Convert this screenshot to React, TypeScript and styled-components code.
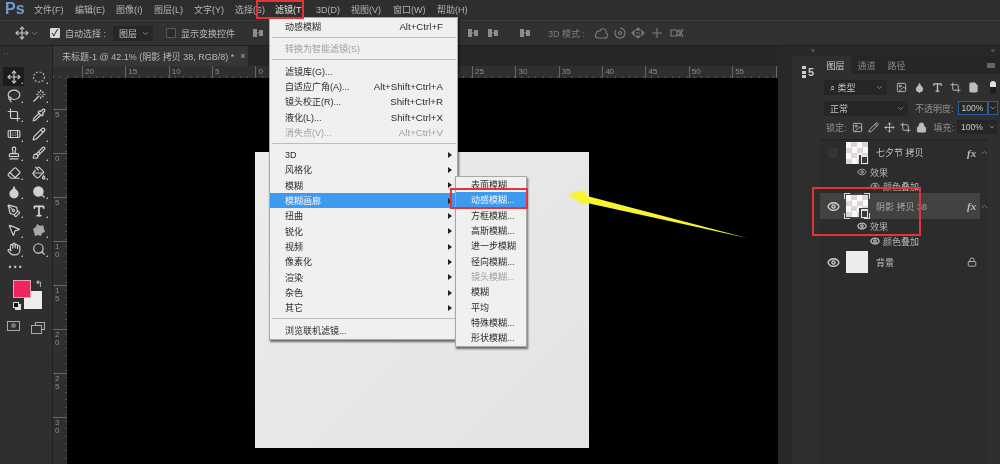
import React from "react";
import styled, { createGlobalStyle } from "styled-components";
import {
  Brush,
  ChevronDown,
  ChevronUp,
  Crop,
  Droplet,
  Eye,
  Eraser,
  File,
  Hand,
  Image,
  Lasso,
  Lock,
  Move,
  PaintBucket,
  Pencil,
  PenTool,
  Pipette,
  Search,
  Stamp,
  Type,
  Wand,
  Bandage,
  MousePointer2,
} from "lucide-react";

const GlobalStyle = createGlobalStyle`
  html, body { margin: 0; padding: 0; background: #2b2b2b; overflow: hidden; }
  #root { width: 1000px; height: 464px; }
  * { box-sizing: border-box; }
`;

const Shell = styled.div`
  position: relative;
  width: 1000px;
  height: 464px;
  display: flex;
  flex-direction: column;
  overflow: hidden;
  font-family: "Liberation Sans", "Noto Sans CJK SC", sans-serif;
  font-size: 9px;
  color: #c4c4c4;
  background: #2b2b2b;
  filter: blur(0.4px);
`;

const MenuBar = styled.div`
  height: 20px;
  flex: none;
  display: flex;
  align-items: center;
  padding: 0 0 1px 34px;
  gap: 11.5px;
  background: #2e2e2e;
`;

const Logo = styled.span`
  position: absolute;
  left: 5px;
  top: 0;
  font-size: 16px;
  font-weight: 700;
  color: #6d9fce;
`;

const MenuLabel = styled.span<{ $w: number; $active?: boolean }>`
  width: ${(p) => p.$w}px;
  white-space: nowrap;
  font-size: 9px;
  color: ${(p) => (p.$active ? "#e4e4e4" : "#b4b4b4")};
`;

const OptionsBar = styled.div`
  height: 26px;
  flex: none;
  display: flex;
  align-items: center;
  padding-left: 15px;
  background: #313131;
  border-top: 1px solid #3a3a3a;
  border-bottom: 1px solid #1f1f1f;
`;

const Check = styled.span<{ $on?: boolean; $ml: number }>`
  width: 10px;
  height: 10px;
  margin-left: ${(p) => p.$ml}px;
  flex: none;
  display: grid;
  place-items: center;
  font-size: 9px;
  line-height: 1;
  font-weight: 700;
  color: #333;
  background: ${(p) => (p.$on ? "#d8d8d8" : "#2a2a2a")};
  border: 1px solid ${(p) => (p.$on ? "#d8d8d8" : "#5c5c5c")};
  border-radius: 1px;
`;

const OptionText = styled.span<{ $ml: number; $dim?: boolean }>`
  margin-left: ${(p) => p.$ml}px;
  white-space: nowrap;
  font-size: 9px;
  color: ${(p) => (p.$dim ? "#7e7e7e" : "#b8b8b8")};
`;

const SelectBox = styled.span<{ $w: number; $ml?: number }>`
  width: ${(p) => p.$w}px;
  height: 15px;
  margin-left: ${(p) => p.$ml ?? 0}px;
  flex: none;
  display: flex;
  align-items: center;
  justify-content: space-between;
  padding: 0 3px 0 6px;
  font-size: 9px;
  color: #c0c0c0;
  background: #262626;
  border-radius: 1px;
`;

const Glyph = styled.svg<{ $ml?: number }>`
  flex: none;
  margin-left: ${(p) => p.$ml ?? 0}px;
`;

const Workspace = styled.div`
  flex: 1;
  min-height: 0;
  display: flex;
`;

const ToolPanel = styled.div`
  width: 53px;
  flex: none;
  padding: 4px 0 0 3px;
  background: #2f2f2f;
  border-right: 1px solid #1f1f1f;
`;

const Grip = styled.div`
  height: 17px;
  color: #777;
  font-size: 7px;
  letter-spacing: 1px;
  line-height: 7px;
`;

const ToolGrid = styled.div`
  display: grid;
  grid-template-columns: 21px 21px;
  column-gap: 4px;
  grid-auto-rows: 19.2px;
  justify-items: center;
  align-items: center;
`;

const ToolCell = styled.div<{ $active?: boolean }>`
  position: relative;
  width: 21px;
  height: 19px;
  display: grid;
  place-items: center;
  color: #d0d0d0;
  background: ${(p) => (p.$active ? "#1c1c1c" : "transparent")};
  &::after {
    content: "";
    position: absolute;
    right: 1px;
    bottom: 2px;
    border-left: 2px solid transparent;
    border-bottom: 2px solid #bdbdbd;
  }
`;

const Dots = styled.div`
  height: 21px;
  padding: 4px 0 0 5px;
  font-size: 14px;
  line-height: 8px;
  font-weight: 700;
  letter-spacing: 0.5px;
  color: #c8c8c8;
`;

const Swatches = styled.div`
  position: relative;
  height: 36px;
  margin: 0 0 0 10px;
`;

const BackColor = styled.div`
  position: absolute;
  left: 11px;
  top: 11px;
  width: 18px;
  height: 18px;
  background: #eeeeee;
`;

const ForeColor = styled.div`
  position: absolute;
  left: 0;
  top: 0;
  width: 18px;
  height: 18px;
  background: #f2255d;
  border: 1px solid #e8a0b4;
`;

const SwapMark = styled.span`
  position: absolute;
  left: 22px;
  top: 0;
  font-size: 9px;
  line-height: 9px;
  color: #ddd;
`;

const ResetMark = styled.span`
  position: absolute;
  left: 0;
  top: 22px;
  width: 6px;
  height: 6px;
  background: #111;
  border: 1px solid #ddd;
  box-shadow: 2px 2px 0 #ddd;
`;

const ModeRow = styled.div`
  display: flex;
  align-items: center;
  gap: 12px;
  margin: 5px 0 0 4px;
`;

const QuickMask = styled.span`
  width: 13px;
  height: 10px;
  display: grid;
  place-items: center;
  border: 1px solid #aaa;
  &::after {
    content: "";
    width: 5px;
    height: 5px;
    border-radius: 50%;
    background: #777;
  }
`;

const ScreenMode = styled.span`
  position: relative;
  width: 10px;
  height: 8px;
  margin-left: 3px;
  border: 1px solid #aaa;
  &::after {
    content: "";
    position: absolute;
    left: -5px;
    top: 2px;
    width: 9px;
    height: 7px;
    background: #2f2f2f;
    border: 1px solid #aaa;
  }
`;

const DocArea = styled.div`
  flex: 1;
  min-width: 0;
  display: flex;
  flex-direction: column;
  background: #000;
`;

const TabStrip = styled.div`
  height: 20px;
  flex: none;
  display: flex;
  background: #262626;
`;

const DocTab = styled.div`
  width: 195px;
  display: flex;
  align-items: center;
  padding-left: 9px;
  gap: 6px;
  white-space: nowrap;
  font-size: 9px;
  color: #b8b8b8;
  background: #363636;
`;

const HRuler = styled.div`
  height: 12px;
  flex: none;
  display: flex;
  padding-left: 29px;
  overflow: hidden;
  background: repeating-linear-gradient(
      90deg,
      #555 0 1px,
      transparent 1px 7.2px
    )
    bottom left / 100% 2px no-repeat #2f2f2f;
`;

const HTick = styled.span`
  width: 43.35px;
  flex: none;
  padding-left: 2px;
  font-size: 8px;
  line-height: 11px;
  color: #8c8c8c;
  border-left: 1px solid #666;
`;

const CanvasRow = styled.div`
  flex: 1;
  min-height: 0;
  display: flex;
`;

const VRuler = styled.div`
  width: 14px;
  flex: none;
  padding-top: 31px;
  overflow: hidden;
  background: repeating-linear-gradient(
      180deg,
      #555 0 1px,
      transparent 1px 7.3px
    )
    top right / 2px 100% no-repeat #2f2f2f;
`;

const VTick = styled.div`
  height: 44px;
  padding: 1px 0 0 2px;
  font-size: 8px;
  line-height: 8px;
  color: #8c8c8c;
  border-top: 1px solid #666;
  white-space: pre;
`;

const Canvas = styled.div`
  flex: 1;
  background: #000;
  padding: 74px 0 0 188px;
`;

const Sheet = styled.div`
  width: 334px;
  height: 296px;
  background: linear-gradient(135deg, #ececec, #e3e3e3);
`;

const Dock = styled.div`
  width: 42px;
  flex: none;
  display: flex;
  flex-direction: column;
  padding-left: 14px;
  background: #282828;
`;

const PanelGrip = styled.div`
  height: 10px;
  flex: none;
  padding-right: 5px;
  text-align: right;
  font-size: 7px;
  line-height: 9px;
  color: #777;
`;

const DockStrip = styled.div`
  flex: 1;
  padding: 9px 0 0 10px;
  background: #2e2e2e;
`;

const HistoryIcon = styled.div`
  display: flex;
  align-items: center;
  gap: 2px;
  height: 14px;
  font-size: 11px;
  font-weight: 700;
  color: #ccc;
`;

const Stack = styled.span`
  width: 4px;
  height: 12px;
  background: repeating-linear-gradient(180deg, #ccc 0 3px, #2e2e2e 3px 4.5px);
`;

const LayersPanel = styled.div`
  width: 180px;
  flex: none;
  display: flex;
  flex-direction: column;
  background: #2f2f2f;
`;

const PanelHead = styled(PanelGrip)`
  background: #282828;
`;

const PanelTabs = styled.div`
  height: 18px;
  flex: none;
  display: flex;
  align-items: center;
  background: #262626;
`;

const PanelTab = styled.span<{ $active?: boolean }>`
  width: 31px;
  height: 100%;
  margin-right: ${(p) => (p.$active ? 0 : -1)}px;
  display: grid;
  place-items: center;
  font-size: 9px;
  color: ${(p) => (p.$active ? "#cfcfcf" : "#858585")};
  background: ${(p) => (p.$active ? "#2f2f2f" : "transparent")};
`;

const PanelMenu = styled.span`
  width: 8px;
  height: 5px;
  margin-left: auto;
  margin-right: 5px;
  background: #666;
`;

const PanelRow = styled.div<{ $h: number }>`
  height: ${(p) => p.$h}px;
  flex: none;
  display: flex;
  align-items: center;
  padding-left: 4px;
`;

const FilterIcons = styled.div`
  display: flex;
  gap: 7px;
  margin-left: 9px;
  color: #bcbcbc;
`;

const SwitchDot = styled.span`
  width: 6px;
  height: 13px;
  margin-left: 11px;
  border-radius: 3px;
  background: linear-gradient(#e0e0e0 0 6px, #1d1d1d 6px);
`;

const PanelLabel = styled.span<{ $ml: number }>`
  margin-left: ${(p) => p.$ml}px;
  white-space: nowrap;
  font-size: 9px;
  color: #8f8f8f;
`;

const NumberBox = styled.span<{ $focus?: boolean; $ml?: number }>`
  width: 30px;
  height: 14px;
  margin-left: ${(p) => p.$ml ?? 0}px;
  flex: none;
  padding-left: 3px;
  font-size: 8.5px;
  line-height: 12px;
  color: #c8c8c8;
  background: #262626;
  border: 1px solid ${(p) => (p.$focus ? "#2a5f9e" : "#262626")};
`;

const ChevronBox = styled.span<{ $focus?: boolean }>`
  width: 10px;
  height: 14px;
  flex: none;
  display: grid;
  place-items: center;
  color: #aaa;
  background: #262626;
  border: 1px solid ${(p) => (p.$focus ? "#2a5f9e" : "#262626")};
`;

const LockIcons = styled.div`
  display: flex;
  align-items: center;
  gap: 5px;
  margin-left: 5px;
  color: #bcbcbc;
`;

const LayerList = styled.div`
  flex: 1;
  width: 168px;
  border-top: 1px solid #242424;
  background: #2c2c2c;
`;

const LayerRow = styled.div<{ $selected?: boolean; $h?: number }>`
  height: ${(p) => p.$h ?? 26}px;
  display: flex;
  align-items: center;
  background: ${(p) => (p.$selected ? "#424242" : "transparent")};
`;

const EyeSlot = styled.span`
  width: 26px;
  flex: none;
  display: grid;
  place-items: center;
  color: #d2d2d2;
`;

const HiddenBox = styled.span`
  width: 8px;
  height: 8px;
  background: #333;
  border: 1px solid #3a3a3a;
`;

const Thumb = styled.span<{ $plain?: boolean; $framed?: boolean }>`
  position: relative;
  width: 22px;
  height: 22px;
  flex: none;
  background: ${(p) =>
    p.$plain
      ? "#ececec"
      : "repeating-conic-gradient(#dcd6d6 0 25%, #fbf8f8 0 50%) 0 0 / 11px 11px"};
  &::before {
    content: "";
    display: ${(p) => (p.$framed ? "block" : "none")};
    position: absolute;
    inset: -2px;
    --c: #d8d8d8;
    background:
      linear-gradient(var(--c) 0 0) 0 0 / 6px 1px,
      linear-gradient(var(--c) 0 0) 0 0 / 1px 6px,
      linear-gradient(var(--c) 0 0) 100% 0 / 6px 1px,
      linear-gradient(var(--c) 0 0) 100% 0 / 1px 6px,
      linear-gradient(var(--c) 0 0) 0 100% / 6px 1px,
      linear-gradient(var(--c) 0 0) 0 100% / 1px 6px,
      linear-gradient(var(--c) 0 0) 100% 100% / 6px 1px,
      linear-gradient(var(--c) 0 0) 100% 100% / 1px 6px;
    background-repeat: no-repeat;
  }
`;

const SmartBadge = styled.span`
  position: absolute;
  right: -1px;
  bottom: -1px;
  width: 10px;
  height: 10px;
  display: grid;
  place-items: center;
  background: #3a3a3a;
  &::after {
    content: "";
    width: 5px;
    height: 6px;
    border: 1px solid #e4e4e4;
    border-top-width: 2px;
  }
`;

const LayerName = styled.span<{ $dim?: boolean }>`
  flex: 1;
  margin-left: 8px;
  white-space: nowrap;
  font-size: 9px;
  color: ${(p) => (p.$dim ? "#a6a6a6" : "#c2c2c2")};
`;

const Fx = styled.span`
  width: 10px;
  margin-right: 3px;
  font-family: "Liberation Serif", serif;
  font-style: italic;
  font-weight: 700;
  font-size: 11px;
  color: #bbb;
`;

const Collapse = styled.span`
  width: 8px;
  align-self: stretch;
  display: grid;
  place-items: center;
  color: #888;
  background: #2c2c2c;
`;

const EffectRow = styled.div<{ $indent: number; $h: number }>`
  height: ${(p) => p.$h}px;
  display: flex;
  align-items: center;
  gap: 3px;
  padding-left: ${(p) => p.$indent}px;
  font-size: 9px;
  color: #b6b6b6;
`;

const FilterMenu = styled.div`
  position: absolute;
  left: 269px;
  top: 17px;
  width: 189px;
  padding: 1px 0;
  color: #2a2a2a;
  background: #f0f0f0;
  border: 1px solid #a8a8a8;
  box-shadow: 1px 2px 2px rgba(0, 0, 0, 0.55);
  font-size: 9px;
`;

const SubMenu = styled(FilterMenu)`
  left: 455px;
  top: 176px;
  width: 72px;
  padding: 0;
`;

const MenuItem = styled.div<{ $hot?: boolean; $off?: boolean }>`
  height: 15.33px;
  display: flex;
  align-items: center;
  justify-content: space-between;
  padding: 0 14px 0 15px;
  white-space: nowrap;
  color: ${(p) => (p.$hot ? "#f4f4f4" : p.$off ? "#a0a0a0" : "#2a2a2a")};
  background: ${(p) => (p.$hot ? "#3d9af0" : "transparent")};
`;

const Shortcut = styled.span`
  font-size: 9.7px;
`;

const Arrow = styled.span`
  margin-right: -9px;
  border-left: 4px solid #222;
  border-top: 3px solid transparent;
  border-bottom: 3px solid transparent;
`;

const MenuRule = styled.div`
  height: 1px;
  margin: 2.95px 1px 2.95px 2px;
  background: #bdbdbd;
`;

const SubItem = styled(MenuItem)`
  padding: 0 0 0 15px;
`;

const RedBox = styled.div<{ $x: number; $y: number; $w: number; $h: number }>`
  position: absolute;
  left: ${(p) => p.$x}px;
  top: ${(p) => p.$y}px;
  width: ${(p) => p.$w}px;
  height: ${(p) => p.$h}px;
  border: 2px solid #e2333a;
`;

const Pointer = styled.svg`
  position: absolute;
  left: 560px;
  top: 180px;
`;

const menuLabels: [string, number][] = [
  ["文件(F)", 29.5],
  ["编辑(E)", 29.5],
  ["图像(I)", 26.5],
  ["图层(L)", 28.5],
  ["文字(Y)", 29.5],
  ["选择(S)", 28.5],
  ["滤镜(T)", 29.5],
  ["3D(D)", 23.5],
  ["视图(V)", 30.5],
  ["窗口(W)", 32.5],
  ["帮助(H)", 32],
];

const blurItems = ["3D", "风格化", "模糊", "模糊画廊", "扭曲", "锐化", "视频", "像素化", "渲染", "杂色", "其它"];
const subItems = ["表面模糊", "动感模糊...", "方框模糊...", "高斯模糊...", "进一步模糊", "径向模糊...", "镜头模糊...", "模糊", "平均", "特殊模糊...", "形状模糊..."];

// the ticks behind the open menu carry no visible label
const rulerLabels = ["20", "15", "10", "5", "0", "", "", "", "", "25", "30", "35", "40", "45", "50", "55", ""];

const Marquee = () => (
  <svg width="14" height="14" viewBox="0 0 14 14" fill="none" stroke="#aaa" strokeWidth="1.2" strokeDasharray="2 1.5">
    <ellipse cx="7" cy="7" rx="5.5" ry="5" />
  </svg>
);

const Blob = () => (
  <svg width="14" height="14" viewBox="0 0 14 14" fill="#a8a8a8">
    <path d="M5 1l3 2 3-1 1 4 1 3-3 1-1 3-3-1-3 1-1-4-1-3 3-2z" />
  </svg>
);

const Align = ({ ml }: { ml: number }) => (
  <Glyph $ml={ml} width="10" height="12" viewBox="0 0 10 12" fill="#8c8c8c">
    <rect x="0" y="2" width="4" height="8" />
    <rect x="6" y="3" width="4" height="6" />
    <rect x="0" y="5.5" width="10" height="1" />
  </Glyph>
);

const modePaths = [
  "M2 7a3 3 0 0 1 4-3a3 3 0 0 1 6 2a2.5 2.5 0 0 1-2 5H4a2.5 2.5 0 0 1-2-4z",
  "M7 1a5 5 0 1 1-4 2M7 4.5a1.5 1.5 0 1 0 .01 0",
  "M7 1l2 2H5zM7 11l2-2H5zM1 6l2-2v4zM13 6l-2-2v4zM5 6h4",
  "M7 1v3M7 8v3M2 6h3M9 6h3M6 5h2v2H6z",
  "M1 3h6v6H1zM7 5l3-2v6l-3-2M13 2l-2 4l2 4",
];

const tools = [
  <Move size={14} key="move" />,
  <Marquee key="marquee" />,
  <Lasso size={14} key="lasso" />,
  <Wand size={14} key="wand" />,
  <Crop size={14} key="crop" />,
  <Pipette size={14} key="dropper" />,
  <Bandage size={14} key="heal" />,
  <Pencil size={14} key="pencil" />,
  <Stamp size={14} key="stamp" />,
  <Brush size={14} key="history" />,
  <Eraser size={14} key="eraser" />,
  <PaintBucket size={14} key="bucket" />,
  <Droplet size={14} key="smudge" fill="#d0d0d0" />,
  <Search size={14} key="dodge" fill="#d0d0d0" />,
  <PenTool size={14} key="pen" />,
  <Type size={14} key="type" strokeWidth={3} />,
  <MousePointer2 size={14} key="select" fill="#222" />,
  <Blob key="shape" />,
  <Hand size={14} key="hand" />,
  <Search size={14} key="zoom" />,
];

const modeGaps = [9, 5, 4, 5, 6];

const App: React.FC = () => {
  return (
    <Shell>
      <GlobalStyle />
      <MenuBar>
        <Logo>Ps</Logo>
        {menuLabels.map(([label, w]) => (
          <MenuLabel key={label} $w={w} $active={label === "滤镜(T)"}>
            {label}
          </MenuLabel>
        ))}
      </MenuBar>

      <OptionsBar>
        <Move size={14} color="#c8c8c8" />
        <ChevronDown size={9} color="#888" style={{ marginLeft: 1 }} />
        <Check $on $ml={11}>✓</Check>
        <OptionText $ml={5}>自动选择 :</OptionText>
        <SelectBox $w={40} $ml={7}>
          图层
          <ChevronDown size={9} color="#999" />
        </SelectBox>
        <Check $ml={13} />
        <OptionText $ml={5}>显示变换控件</OptionText>
        <Align ml={18} />
        <Align ml={205} />
        <Align ml={10} />
        <Align ml={22} />
        <OptionText $ml={18} $dim>3D 模式 :</OptionText>
        {modePaths.map((d, i) => (
          <Glyph key={i} $ml={modeGaps[i]} width="14" height="12" viewBox="0 0 14 12" fill="none" stroke="#7a7a7a" strokeWidth="1.2">
            <path d={d} />
          </Glyph>
        ))}
      </OptionsBar>

      <Workspace>
        <ToolPanel>
          <Grip>··</Grip>
          <ToolGrid>
            {tools.map((tool, i) => (
              <ToolCell key={i} $active={i === 0}>
                {tool}
              </ToolCell>
            ))}
          </ToolGrid>
          <Dots>···</Dots>
          <Swatches>
            <BackColor />
            <ForeColor />
            <SwapMark>↰</SwapMark>
            <ResetMark />
          </Swatches>
          <ModeRow>
            <QuickMask />
            <ScreenMode />
          </ModeRow>
        </ToolPanel>

        <DocArea>
          <TabStrip>
            <DocTab>
              未标题-1 @ 42.1% (阴影 拷贝 38, RGB/8) *<span>×</span>
            </DocTab>
          </TabStrip>
          <HRuler>
            {rulerLabels.map((n, i) => (
              <HTick key={i}>{n}</HTick>
            ))}
          </HRuler>
          <CanvasRow>
            <VRuler>
              {["5", "0", "5", "1\n0", "1\n5", "2\n0", "2\n5", "3\n0"].map((n, i) => (
                <VTick key={i}>{n}</VTick>
              ))}
            </VRuler>
            <Canvas>
              <Sheet />
            </Canvas>
          </CanvasRow>
        </DocArea>

        <Dock>
          <PanelGrip>»</PanelGrip>
          <DockStrip>
            <HistoryIcon>
              <Stack />5
            </HistoryIcon>
          </DockStrip>
        </Dock>

        <LayersPanel>
          <PanelHead>«</PanelHead>
          <PanelTabs>
            <PanelTab $active>图层</PanelTab>
            <PanelTab>通道</PanelTab>
            <PanelTab>路径</PanelTab>
            <PanelMenu />
          </PanelTabs>
          <PanelRow $h={27}>
            <SelectBox $w={63}>
              ⌕ 类型
              <ChevronDown size={9} color="#999" />
            </SelectBox>
            <FilterIcons>
              <Image size={11} />
              <Droplet size={11} fill="#bcbcbc" />
              <Type size={11} strokeWidth={3} />
              <Crop size={11} />
              <File size={11} fill="#bcbcbc" />
            </FilterIcons>
            <SwitchDot />
          </PanelRow>
          <PanelRow $h={14}>
            <SelectBox $w={84}>
              正常
              <ChevronDown size={9} color="#999" />
            </SelectBox>
            <PanelLabel $ml={7}>不透明度:</PanelLabel>
            <NumberBox $focus $ml={4}>100%</NumberBox>
            <ChevronBox $focus>
              <ChevronDown size={8} />
            </ChevronBox>
          </PanelRow>
          <PanelRow $h={24}>
            <PanelLabel $ml={2}>锁定:</PanelLabel>
            <LockIcons>
              <Image size={11} />
              <Pencil size={11} />
              <Move size={11} />
              <Crop size={11} />
              <Lock size={11} fill="#bcbcbc" />
            </LockIcons>
            <PanelLabel $ml={7}>填充:</PanelLabel>
            <NumberBox $ml={3}>100%</NumberBox>
            <ChevronBox>
              <ChevronDown size={8} />
            </ChevronBox>
          </PanelRow>
          <LayerList>
            <LayerRow $h={25}>
              <EyeSlot>
                <HiddenBox />
              </EyeSlot>
              <Thumb>
                <SmartBadge />
              </Thumb>
              <LayerName>七夕节 拷贝</LayerName>
              <Fx>fx</Fx>
              <Collapse>
                <ChevronUp size={9} />
              </Collapse>
            </LayerRow>
            <EffectRow $indent={37} $h={14}>
              <Eye size={10} />效果
            </EffectRow>
            <EffectRow $indent={50} $h={14}>
              <Eye size={10} />颜色叠加
            </EffectRow>
            <LayerRow $selected>
              <EyeSlot>
                <Eye size={13} strokeWidth={2.5} />
              </EyeSlot>
              <Thumb $framed>
                <SmartBadge />
              </Thumb>
              <LayerName $dim>阴影 拷贝 38</LayerName>
              <Fx>fx</Fx>
              <Collapse>
                <ChevronUp size={9} />
              </Collapse>
            </LayerRow>
            <EffectRow $indent={37} $h={14}>
              <Eye size={10} strokeWidth={3} />效果
            </EffectRow>
            <EffectRow $indent={50} $h={16}>
              <Eye size={10} strokeWidth={3} />颜色叠加
            </EffectRow>
            <LayerRow>
              <EyeSlot>
                <Eye size={13} strokeWidth={2.5} />
              </EyeSlot>
              <Thumb $plain />
              <LayerName>背景</LayerName>
              <Lock size={10} style={{ marginRight: 11 }} />
            </LayerRow>
          </LayerList>
        </LayersPanel>
      </Workspace>

      <FilterMenu>
        <MenuItem>动感模糊<Shortcut>Alt+Ctrl+F</Shortcut></MenuItem>
        <MenuRule />
        <MenuItem $off>转换为智能滤镜(S)</MenuItem>
        <MenuRule />
        <MenuItem>滤镜库(G)...</MenuItem>
        <MenuItem>自适应广角(A)...<Shortcut>Alt+Shift+Ctrl+A</Shortcut></MenuItem>
        <MenuItem>镜头校正(R)...<Shortcut>Shift+Ctrl+R</Shortcut></MenuItem>
        <MenuItem>液化(L)...<Shortcut>Shift+Ctrl+X</Shortcut></MenuItem>
        <MenuItem $off>消失点(V)...<Shortcut>Alt+Ctrl+V</Shortcut></MenuItem>
        <MenuRule />
        {blurItems.map((label) => (
          <MenuItem key={label} $hot={label === "模糊画廊"}>
            {label}
            <Arrow />
          </MenuItem>
        ))}
        <MenuRule />
        <MenuItem>浏览联机滤镜...</MenuItem>
      </FilterMenu>

      <SubMenu>
        {subItems.map((label) => (
          <SubItem key={label} $hot={label === "动感模糊..."} $off={label === "镜头模糊..."}>
            {label}
          </SubItem>
        ))}
      </SubMenu>

      <RedBox $x={256} $y={0} $w={48} $h={19} />
      <RedBox $x={450} $y={188} $w={78} $h={21} />
      <RedBox $x={812} $y={187} $w={109} $h={49} />

      <Pointer width="195" height="65" viewBox="0 0 195 65">
        <path d="M8 14L24 10L27 16L187 58L27 23L23 25Z" fill="#f7f431" />
      </Pointer>
    </Shell>
  );
};

export default App;
